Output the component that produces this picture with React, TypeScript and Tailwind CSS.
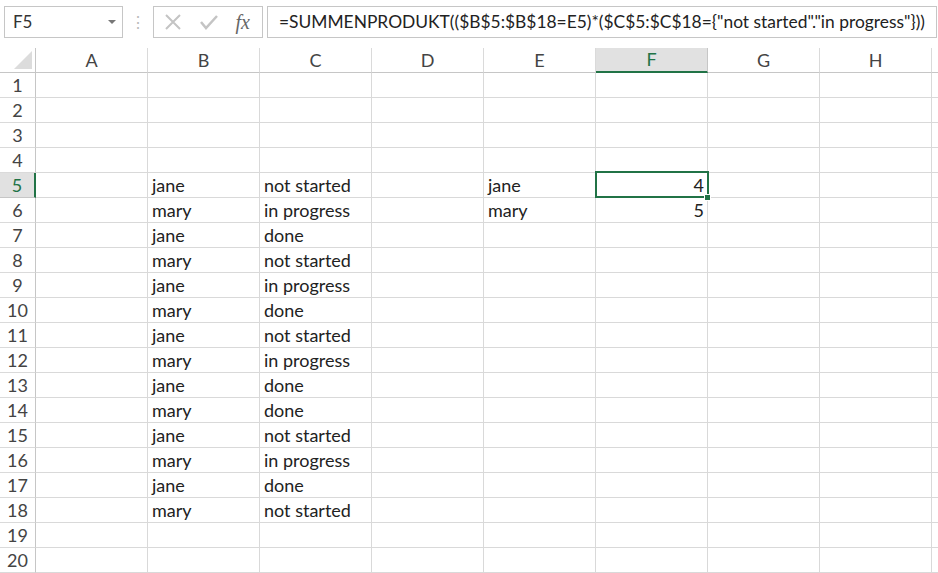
import React from 'react';

const cols = ['A', 'B', 'C', 'D', 'E', 'F', 'G', 'H'];

const formula = '=SUMMENPRODUKT(($B$5:$B$18=E5)*($C$5:$C$18={"not started"."in progress"}))';

const data: Record<number, Record<string, string>> = {
    5: { B: 'jane', C: 'not started', E: 'jane', F: '4' },
    6: { B: 'mary', C: 'in progress', E: 'mary', F: '5' },
    7: { B: 'jane', C: 'done' },
    8: { B: 'mary', C: 'not started' },
    9: { B: 'jane', C: 'in progress' },
    10: { B: 'mary', C: 'done' },
    11: { B: 'jane', C: 'not started' },
    12: { B: 'mary', C: 'in progress' },
    13: { B: 'jane', C: 'done' },
    14: { B: 'mary', C: 'done' },
    15: { B: 'jane', C: 'not started' },
    16: { B: 'mary', C: 'in progress' },
    17: { B: 'jane', C: 'done' },
    18: { B: 'mary', C: 'not started' },
};

const numeric = new Set(['F']);

export default function App() {
    const rows = Array.from({ length: 20 }, (_, i) => i + 1);

    return (
        <div className="w-[938px] h-[573px] overflow-hidden bg-white text-[#222] font-['Lato','Liberation_Sans',sans-serif]">
            {/* formula bar */}
            <div className="h-[48px] flex items-start pt-[6px]">
                <div className="ml-[4px] w-[119px] h-[32px] border border-[#c6c6c6] flex items-center justify-between pl-[8px] pr-[6px]">
                    <span className="text-[17px] text-[#333]">F5</span>
                    <span className="w-0 h-0 border-l-[4px] border-r-[4px] border-t-[4px] border-l-transparent border-r-transparent border-t-[#777]" />
                </div>
                <div className="w-[30px] h-[32px] flex items-center justify-center text-[#bbb] text-[16px]">⋮</div>
                <div className="w-[110px] h-[32px] border border-[#c6c6c6] flex items-center justify-between px-[10px]">
                    <svg width="18" height="18" viewBox="0 0 18 18">
                        <path d="M2 2 L16 16 M16 2 L2 16" stroke="#c4c4c4" strokeWidth="2" fill="none" />
                    </svg>
                    <svg width="20" height="18" viewBox="0 0 20 18">
                        <path d="M2 9 L7 15 L18 3" stroke="#c4c4c4" strokeWidth="2.5" fill="none" />
                    </svg>
                    <span className="italic text-[20px] leading-none text-[#666] font-['Liberation_Serif',serif] pr-[2px]">fx</span>
                </div>
                <div className="ml-[4px] w-[670px] h-[32px] border border-[#c6c6c6] flex items-center pl-[11px] text-[17.4px] text-[#222] whitespace-nowrap overflow-hidden">
                    {formula}
                </div>
            </div>

            {/* grid */}
            <div className="grid grid-cols-[36px_repeat(8,112px)_6px] auto-rows-[25px]">
                <div className="border-r border-b border-[#c6c6c6] relative">
                    <svg className="absolute right-[3px] bottom-[3px]" width="18" height="18" viewBox="0 0 18 18">
                        <path d="M18 0 L18 18 L0 18 Z" fill="#dcdcdc" />
                    </svg>
                </div>
                {cols.map((c) => (
                    <div
                        key={c}
                        className={
                            c === 'F'
                                ? 'flex items-center justify-center text-[18px] bg-[#e1e1e1] text-[#217346] border-r border-[#c6c6c6] border-b-2 border-b-[#217346]'
                                : 'flex items-center justify-center text-[18px] text-[#444] border-r border-b border-[#dadada] border-b-[#c6c6c6]'
                        }
                    >
                        {c}
                    </div>
                ))}
                <div className="border-b border-[#c6c6c6]" />

                {rows.map((r) => (
                    <React.Fragment key={r}>
                        <div
                            className={
                                r === 5
                                    ? 'flex items-center justify-center text-[18px] bg-[#e1e1e1] text-[#217346] border-b border-[#c6c6c6] border-r-2 border-r-[#217346]'
                                    : 'flex items-center justify-center text-[18px] text-[#444] border-r border-b border-[#c6c6c6] border-b-[#dadada]'
                            }
                        >
                            {r}
                        </div>
                        {cols.map((c) => {
                            const v = data[r]?.[c];
                            const sel = r === 5 && c === 'F';
                            return (
                                <div
                                    key={c}
                                    className={`relative flex items-center border-r border-b border-[#d9d9d9] text-[18px] whitespace-nowrap ${numeric.has(c) ? 'justify-end pr-[3px]' : 'pl-[4px]'} ${sel ? 'z-10' : ''}`}
                                >
                                    {v}
                                    {sel && (
                                        <>
                                            <div className="absolute -top-[2px] -left-[1px] -right-[2px] -bottom-[1px] border-2 border-[#217346]" />
                                            <div className="absolute -right-[4px] -bottom-[4px] w-[7px] h-[7px] bg-[#217346] border border-white" />
                                        </>
                                    )}
                                </div>
                            );
                        })}
                        <div className="border-b border-[#d9d9d9]" />
                    </React.Fragment>
                ))}
            </div>
        </div>
    );
}
